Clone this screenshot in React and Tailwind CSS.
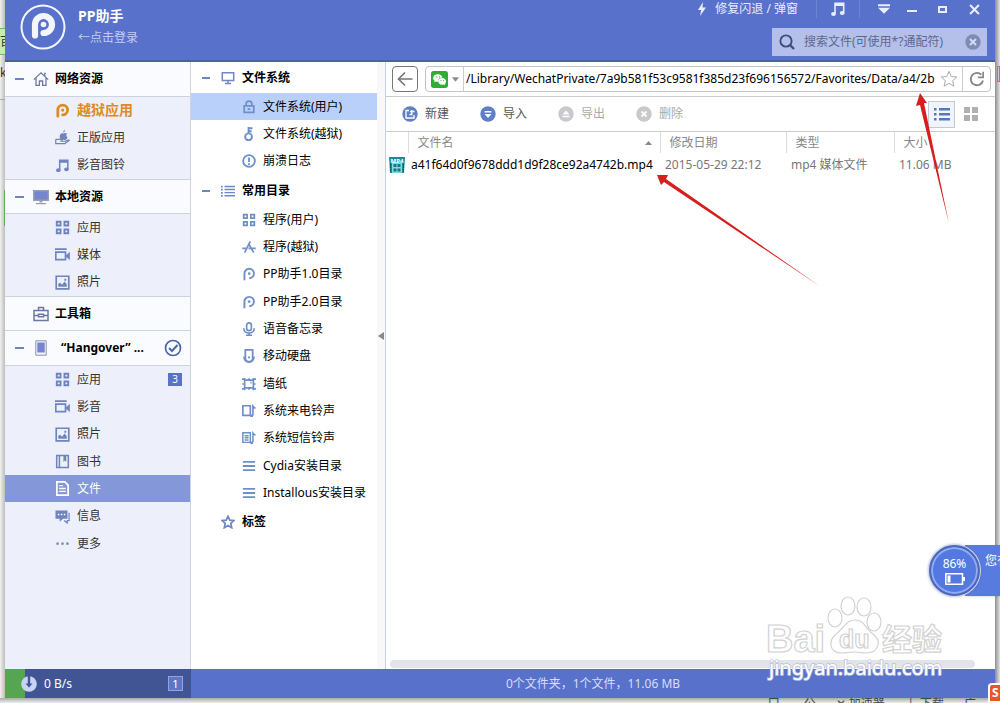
import React, { useState } from 'react';

// 16x16 line icons, drawn in the current text colour
const icons = {
  home: <g fill="none" stroke="currentColor" strokeWidth="1.3"><path d="M.8 8.6 8 1.8l7.2 6.8"/><path d="M3 7v7.3h3.4V10h3.2v4.3H13V7"/><path d="M11.8 5V2.4h1"/></g>,
  monitor: <g><path fill="#9aa0b4" d="M0 1h16v11H0zM6.500 12h3v1.500h-3zM3 14h10v1.200H3z"/><path d="M1.400 2.400h13.200v8.200H1.400z" fill="#7585cf"/></g>,
  toolbox: <g fill="none" stroke="currentColor" strokeWidth="1.500"><path d="M1 4.500h14v10H1zM5.500 4.500v-3h5v3M1 9.500h4.500M10.500 9.500H15M5.500 8.300h5v2.400h-5z"/></g>,
  device: <g><path d="M2.800.8h10.400v14.400H2.800z" fill="#f5f6fb" stroke="#8b93ab"/><path d="M4.300 2.500h7.400v10H4.300z" fill="#7585cf"/></g>,
  pp: <g><path d="M3 14V7.500a5.200 5.200 0 1 1 5.200 5.200" fill="none" stroke="currentColor" strokeWidth="3" strokeLinecap="round"/><circle cx="8.200" cy="7.500" r="1.700" fill="currentColor"/></g>,
  ppThin: <g><path d="M2.800 15V7.500a5.400 5.400 0 1 1 5.400 5.400" fill="none" stroke="currentColor" strokeWidth="2.200"/><circle cx="8.200" cy="7.500" r="1.500" fill="currentColor"/></g>,
  hand: <g><path fill="currentColor" d="M10.500 0c.2 1.300-.6 2.500-1.800 2.700C8.600 1.400 9.400.3 10.500 0zM9 3.600c1-.6 3-.8 4 .4-1.400.9-1.300 3 .4 3.700-.5 1.500-1.500 3-2.800 3-.8 0-1-.4-1.800-.4s-1.200.4-1.900.3C5.200 10.400 4.400 6.700 5.600 4.800 6.400 3.500 8 3.100 9 3.600z"/><path d="M.8 9.800v4.700h9.700L15.300 11c-1-.9-2-.5-4.300 1H6.800c1.200-.8.500-1.900-.8-1.900H.8" fill="none" stroke="currentColor" strokeWidth="1.300"/></g>,
  music: <g fill="currentColor"><path d="M4.200 1.500h10.300v10.200h-1.600V5H5.800v8H4.200z"/><ellipse cx="3.500" cy="13" rx="2.400" ry="2"/><ellipse cx="12.200" cy="12" rx="2.400" ry="2"/></g>,
  apps: <g fill="none" stroke="currentColor" strokeWidth="2"><path d="M1.900 1.900h4v4h-4zM10.100 1.900h4v4h-4zM1.900 10.100h4v4h-4zM10.100 10.100h4v4h-4z"/></g>,
  video: <g><path d="M.8 5.500h10.400v8H.8zM0 2.300h12.500" fill="none" stroke="currentColor" strokeWidth="1.800"/><path d="M11 9.500 15.800 5v9z" fill="currentColor"/></g>,
  photo: <g><path d="M1.300 1.300h13.400v13.400H1.300z" fill="none" stroke="currentColor" strokeWidth="1.800"/><path d="M3.500 12.500V9.300l2-1 2 2L10.200 7l2.300 2.500v3zM10 4h2v2h-2z" fill="currentColor"/></g>,
  book: <g><path d="M1.800 1.500h12.400v13H1.800zM4.700 1.500v13" fill="none" stroke="currentColor" strokeWidth="1.600"/><path d="M9 2h3v6.500L10.500 7 9 8.500z" fill="currentColor"/></g>,
  file: <g><path d="M2 1h8.500L14 4.500V15H2z" fill="none" stroke="currentColor" strokeWidth="1.900"/><path d="M4.500 5h4M4.500 8h7M4.500 11h7" stroke="currentColor" strokeWidth="1.400"/></g>,
  chat: <g><path d="M.5 1.500h12.800v8.800H8.500L5 13.500v-3.200H.5z" fill="currentColor"/><path d="M3 5.800h1.600M6.200 5.800h1.600M9.400 5.800H11" stroke="#fff" strokeWidth="1.500"/><path d="M15 4v8.300h-2V15l-3.300-2.700" fill="none" stroke="currentColor" strokeWidth="1.300"/></g>,
  more: <path d="M1.500 6.800H4v2.400H1.500zM6.800 6.800h2.400v2.400H6.800zM12 6.800h2.500v2.400H12z" fill="currentColor"/>,
  screen: <g fill="none" stroke="currentColor" strokeWidth="1.700"><path d="M1.500 2h13v8.800h-13zM8 11v3M4.500 14.300h7"/></g>,
  list: <path d="M0 2h2v2H0zM0 5.500h2v2H0zM0 9h2v2H0zM0 12.500h2v2H0zM4 2h12v1.700H4zM4 5.500h12v1.700H4zM4 9h12v1.700H4zM4 12.500h12v1.700H4z" fill="currentColor"/>,
  star: <path d="m8 1.500 2 4.400 4.800.5-3.600 3.200 1 4.900L8 12l-4.200 2.500 1-4.900L1.200 6.400 6 5.900z" fill="none" stroke="currentColor" strokeWidth="2"/>,
  lock: <g fill="none" stroke="currentColor" strokeWidth="1.900"><path d="M2.500 6.800h11v7.400h-11zM4.700 6.500V4.600a3.300 3.300 0 0 1 6.600 0v1.900M6.500 10.500h3"/></g>,
  key: <g fill="none" stroke="currentColor" strokeWidth="2.200"><circle cx="7.500" cy="11.200" r="3.900"/><path d="M7.500 8V0M7.500 1.500h4.500M7.500 4.800H11"/></g>,
  alert: <g fill="none" stroke="currentColor" strokeWidth="2.100"><circle cx="8" cy="8" r="6.700"/><path d="M8 4v5M8 10.500v2"/></g>,
  appstore: <g fill="none" stroke="currentColor" strokeWidth="1.900"><path d="M9.500 1.500 3 14.500M7.300 3.500l6 11M.3 9.500h5M7.500 9.500h8.200"/></g>,
  mic: <g fill="none" stroke="currentColor" strokeWidth="1.900"><rect x="5.300" y="1" width="5.400" height="8.800" rx="2.700"/><path d="M2 7c0 7.500 12 7.500 12 0M8 12.500V15M4.500 15.200h7"/></g>,
  disk: <g fill="none" stroke="currentColor" strokeWidth="2"><path d="M3.800 1h8.400v9.200a4.200 4.200 0 1 1-8.400 0z"/><path d="M2.300 8.500c-.5 8.500 11.900 8.500 11.400 0M6.800 9.500h2.400"/></g>,
  wallpaper: <g fill="none" stroke="currentColor" strokeWidth="1.900"><path d="M3 3.500h10v9H3zM0 2.500h3V1M13 1v1.500h3M0 13.500h3V15M13 15v-1.500h3M8 1.500v2M8 12.500v2M.5 8H3M13 8h2.500"/><path d="M9.500 6.500h1.500"/></g>,
  ring: <g fill="none" stroke="currentColor" strokeWidth="1.900"><path d="M1 2h8.500v11H1zM12.500 13V2.500c1 1.500 1.800 2 3 2.300"/><path d="M9.500 13.500h3" strokeWidth="2.800"/></g>,
  sms: <g fill="none" stroke="currentColor" strokeWidth="1.700"><path d="M1 2h8.500v11H1zM12.500 13V2.500c1 1.500 1.800 2 3 2.300M3 5.300h4.500M3 7.700h4.500M3 10.200h4.500"/><path d="M9.500 13.500h3" strokeWidth="2.800"/></g>,
  lines: <path d="M1 3.200h14M1 8h14M1 12.800h14" stroke="currentColor" strokeWidth="2.100"/>,
};

const Icon = ({ name, size = 16, className = '' }) => (
  <svg viewBox="0 0 16 16" width={size} height={size} className={`shrink-0 ${className}`} aria-hidden="true">{icons[name]}</svg>
);

const sidebar = [
  { title: '网络资源', icon: 'home', items: [
    { label: '越狱应用', icon: 'pp', hot: true },
    { label: '正版应用', icon: 'hand' },
    { label: '影音图铃', icon: 'music' },
  ]},
  { title: '本地资源', icon: 'monitor', items: [
    { label: '应用', icon: 'apps' },
    { label: '媒体', icon: 'video' },
    { label: '照片', icon: 'photo' },
  ]},
  { title: '工具箱', icon: 'toolbox', items: [] },
  { title: '“Hangover” ...', icon: 'device', device: true, items: [
    { label: '应用', icon: 'apps', count: 3 },
    { label: '影音', icon: 'video' },
    { label: '照片', icon: 'photo' },
    { label: '图书', icon: 'book' },
    { label: '文件', icon: 'file' },
    { label: '信息', icon: 'chat' },
    { label: '更多', icon: 'more' },
  ]},
];

const tree = [
  { title: '文件系统', icon: 'screen', items: [
    ['文件系统(用户)', 'lock'],
    ['文件系统(越狱)', 'key'],
    ['崩溃日志', 'alert'],
  ]},
  { title: '常用目录', icon: 'list', items: [
    ['程序(用户)', 'apps'],
    ['程序(越狱)', 'appstore'],
    ['PP助手1.0目录', 'ppThin'],
    ['PP助手2.0目录', 'ppThin'],
    ['语音备忘录', 'mic'],
    ['移动硬盘', 'disk'],
    ['墙纸', 'wallpaper'],
    ['系统来电铃声', 'ring'],
    ['系统短信铃声', 'sms'],
    ['Cydia安装目录', 'lines'],
    ['Installous安装目录', 'lines'],
  ]},
  { title: '标签', icon: 'star', items: [] },
];

const Header = () => (
  <header className="flex h-[62px] shrink-0 justify-between border-b-2 border-[#4c60a6] bg-[#5871ca] text-white">
    <div className="flex items-start gap-3 pl-[15px] pt-1">
      <svg viewBox="0 0 46 46" width="46" height="46" aria-hidden="true">
        <circle cx="23" cy="23" r="21.500" fill="none" stroke="#f4f6ff" strokeWidth="2"/>
        <path d="M15 31.500V20.500a8.500 8.500 0 1 1 8.500 8.500" fill="none" stroke="#f4f6ff" strokeWidth="6.200" strokeLinecap="round"/>
        <circle cx="23.500" cy="20.500" r="2.800" fill="#f4f6ff"/>
      </svg>
      <div className="flex flex-col items-start gap-1 pt-0.5">
        <h1 className="text-sm leading-5 font-bold">PP助手</h1>
        <a href="#login" className="leading-4 text-[#c2cdf5]">←点击登录</a>
      </div>
    </div>
    <div className="flex flex-col items-end justify-between pr-2 pb-1">
      <div className="flex h-[18px] items-center text-[#e8edff]">
        <button type="button" className="flex items-center gap-2 pr-[18px]">
          <svg viewBox="0 0 10 14" width="10" height="14" aria-hidden="true"><path d="M6 0 1 8h3.200L3 14l6-8.500H5.500z" fill="currentColor"/></svg>
          修复闪退 / 弹窗
        </button>
        <button type="button" aria-label="音乐" className="flex h-[18px] w-11 items-center justify-center border-x border-[#6c83d6]"><Icon name="music"/></button>
        <button type="button" aria-label="菜单" className="flex w-11 justify-center pl-1">
          <svg viewBox="0 0 10 10" width="12" height="12"><path d="M0 1h10v1.800H0zM0 4h10L5 9z" fill="currentColor"/></svg>
        </button>
        <button type="button" aria-label="最小化" className="flex w-4 justify-center"><span className="mt-1 h-0.5 w-2.5 bg-current"></span></button>
        <button type="button" aria-label="最大化" className="ml-[14px] flex w-4 justify-center"><span className="h-[7px] w-[9px] border-2 border-current"></span></button>
        <button type="button" aria-label="关闭" className="ml-4 flex w-4 justify-center">
          <svg viewBox="0 0 10 10" width="11" height="11"><path d="m1 1 8 8M9 1 1 9" stroke="currentColor" strokeWidth="1.900"/></svg>
        </button>
        <span className="w-[5px]"></span>
      </div>
      <label className="flex h-7 w-[215px] items-center gap-[9px] bg-[#b4c0e9] px-[6px] pl-[7px]">
        <svg viewBox="0 0 16 16" width="16" height="16" className="shrink-0"><circle cx="7" cy="7" r="5.600" fill="none" stroke="#3d4d82" strokeWidth="1.900"/><path d="m11 11 4 4" stroke="#3d4d82" strokeWidth="2.400"/></svg>
        <input type="text" aria-label="搜索文件" placeholder="搜索文件(可使用*?通配符)" className="min-w-0 flex-1 outline-none placeholder:text-[#5d688f]"/>
        <button type="button" aria-label="清除">
          <svg viewBox="0 0 16 16" width="16" height="16"><circle cx="8" cy="8" r="7.700" fill="#7f8bb4"/><path d="m5 5 6 6M11 5l-6 6" stroke="#d3daf3" strokeWidth="2"/></svg>
        </button>
      </label>
    </div>
  </header>
);

const Sidebar = ({ active, onSelect }) => (
  <nav className="w-[186px] shrink-0 border-r border-[#cfd4e2] bg-[#edf0fa] text-[#333]">
    {sidebar.map((s, i) => (
      <section key={s.title}>
        <button type="button" className={`flex h-[35px] w-full items-center border-b border-[#cdd2e0] bg-[#fafbfe] pr-2 pl-[10px] text-left font-bold text-black ${i > 0 && i < 3 ? 'border-t' : ''}`}>
          <span className={`mr-[9px] h-0.5 w-[9px] ${s.items.length ? 'bg-[#6f83bd]' : ''}`}></span>
          <Icon name={s.icon} className="text-[#6b78a3]"/>
          <span className={`flex-1 ${s.device ? 'pl-3' : 'pl-[6px]'}`}>{s.title}</span>
          {s.device && (
            <svg viewBox="0 0 18 18" width="18" height="18"><circle cx="9" cy="9" r="7.500" fill="none" stroke="#4d66a8" strokeWidth="1.700"/><path d="m5 9 3 3 5.500-6" fill="none" stroke="#4d66a8" strokeWidth="2"/></svg>
          )}
        </button>
        <ul>
          {s.items.map(item => {
            const id = `${s.title}/${item.label}`;
            const on = active === id;
            return (
              <li key={id} className="h-[27px] nth-[3n]:h-7">
                <button type="button" onClick={() => onSelect(id)} className={`flex h-full w-full items-center gap-[7px] pr-2 pl-[50px] text-left ${on ? 'bg-[#8497d8] text-white' : ''} ${item.hot ? 'text-[14px] font-bold text-[#dc8b25]' : ''}`}>
                  <Icon name={item.icon} size={15} className={on || item.hot ? '' : 'text-[#6f83bd]'}/>
                  <span className="flex-1">{item.label}</span>
                  {item.count && <span className="h-[13px] w-[14px] bg-[#5871ca] text-center text-[10px] leading-[13px] text-white">{item.count}</span>}
                </button>
              </li>
            );
          })}
        </ul>
      </section>
    ))}
  </nav>
);

const FileTree = ({ active, onSelect }) => (
  <div className="flex w-[195px] shrink-0 border-r border-[#c9cedc] bg-white text-black">
    <nav className="flex-1">
      {tree.map(group => (
        <section key={group.title}>
          <button type="button" className="flex h-[31px] w-full items-center pl-[11px] text-left font-bold">
            <span className={`mr-[11px] h-0.5 w-2 ${group.items.length ? 'bg-[#6f83bd]' : ''}`}></span>
            <Icon name={group.icon} size={14} className="mr-[7px] text-[#6f89c0]"/>
            {group.title}
          </button>
          <ul>
            {group.items.map(([label, icon]) => (
              <li key={label} className="h-[27px] nth-[3n]:h-7">
                <button type="button" onClick={() => onSelect(label)} className={`flex h-full w-full items-center gap-[7px] pl-[51px] text-left whitespace-nowrap ${active === label ? 'bg-[#b9d0fb]' : ''}`}>
                  <Icon name={icon} size={14} className="text-[#6f8fc8]"/>
                  {label}
                </button>
              </li>
            ))}
          </ul>
        </section>
      ))}
    </nav>
    <button type="button" aria-label="收起" className="flex w-2 items-center justify-center bg-[#f8f8fa] pb-[60px]">
      <svg viewBox="0 0 6 8" width="6" height="8"><path d="M6 0v8L0 4z" fill="#888"/></svg>
    </button>
  </div>
);

const AddressBar = () => {
  const [path, setPath] = useState('/Library/WechatPrivate/7a9b581f53c9581f385d23f696156572/Favorites/Data/a4/2b');
  return (
    <div className="flex h-[35px] items-center gap-[7px] border-b border-[#ccc] pr-1 pl-[6px]">
      <button type="button" aria-label="后退" className="flex h-[26px] w-[26px] shrink-0 items-center justify-center rounded-sm border border-[#777]">
        <svg viewBox="0 0 16 16" width="16" height="16"><path d="M15.500 8H1.500M8 1.500 1.500 8 8 14.500" fill="none" stroke="#777" strokeWidth="1.700"/></svg>
      </button>
      <div className="flex h-[26px] min-w-0 flex-1 items-center rounded-sm border border-[#c4c4c4]">
        <button type="button" aria-label="选择应用" className="flex h-full items-center gap-1 border-r border-[#ccc] pr-1 pl-[5px]">
          <svg viewBox="0 0 16 16" width="17" height="17">
            <rect width="16" height="16" rx="2.500" fill="#2fae35"/>
            <path d="M6.500 3C3.900 3 2 4.500 2 6.500c0 1.200.6 2 1.500 2.700L3 10.700l1.800-.9c.6.200 1.200.2 1.900.2C6.300 7.800 8.300 6 10.800 6 10.500 4.200 8.700 3 6.500 3z" fill="#fff"/>
            <path d="M10.500 6.700c-2.200 0-3.800 1.300-3.800 3.100s1.700 3.100 3.800 3.100c.5 0 .9 0 1.300-.2l1.500.8-.4-1.300c.8-.6 1.300-1.400 1.300-2.400 0-1.800-1.600-3.100-3.700-3.100z" fill="#fff"/>
            <path d="M5 5.500h.8M7.600 5.500h.8M9 9h.7M11.300 9h.7" stroke="#2fae35"/>
          </svg>
          <svg viewBox="0 0 8 5" width="7" height="5"><path d="M0 0h8L4 5z" fill="#888"/></svg>
        </button>
        <input type="text" aria-label="路径" value={path} onChange={e => setPath(e.target.value)} className="min-w-0 flex-1 pl-0.5 text-black outline-none"/>
        <button type="button" aria-label="收藏" className="pr-1">
          <svg viewBox="0 0 18 18" width="18" height="18"><path d="m9 1.300 2.200 5.200 5.600.5-4.200 3.700 1.300 5.500L9 13.300l-4.900 2.900 1.300-5.500L1.200 7l5.600-.5z" fill="#fff" stroke="#aaa"/></svg>
        </button>
        <button type="button" aria-label="刷新" className="flex h-full w-7 items-center justify-center border-l border-[#ccc]">
          <svg viewBox="0 0 16 16" width="16" height="16"><path d="M14 9.500A6.200 6.200 0 1 1 12.400 3.700" fill="none" stroke="#888" strokeWidth="1.900"/><path d="M15 .8v6.400H8.800V5.500h4.500V.8z" fill="#888"/></svg>
        </button>
      </div>
    </div>
  );
};

const tools = [
  { label: '新建', sign: <path d="M7 4.500H4v7.500h8V9M7.500 8.500h2.300V4M8 5.500h4.500" fill="none" stroke="#fff" strokeWidth="1.300"/> },
  { label: '导入', sign: <path d="M4.500 5h7v1.500h-7zM4.500 8h7L8 12z" fill="#fff"/> },
  { label: '导出', off: true, sign: <path d="M4.500 9.800h7v1.500h-7zM4.500 8.500h7L8 4.500z" fill="#fff"/> },
  { label: '删除', off: true, sign: <path d="m5.500 5.500 5 5M10.500 5.500l-5 5" stroke="#fff" strokeWidth="1.900"/> },
];

const Toolbar = () => (
  <div className="flex h-[35px] items-center justify-between border-b border-[#ccc] pr-[9px] pl-4">
    <div className="flex gap-[31px]">
      {tools.map(t => (
        <button key={t.label} type="button" disabled={t.off} className={`flex items-center gap-[7px] ${t.off ? 'text-[#aaa]' : 'text-[#555]'}`}>
          <svg viewBox="0 0 16 16" width="16" height="16"><circle cx="8" cy="8" r="7.700" fill={t.off ? '#c9c9cd' : '#5f7fc4'}/>{t.sign}</svg>
          {t.label}
        </button>
      ))}
    </div>
    <div className="flex items-center">
      <button type="button" aria-label="列表视图" className="flex h-[27px] w-[27px] items-center justify-center border border-[#c3c9d8] bg-[#f1f4fb] text-[#5577bb]">
        <svg viewBox="0 0 16 14" width="16" height="14"><path d="M0 1h2.500v2.500H0zM0 6h2.500v2.500H0zM0 11h2.500v2.500H0zM5 1h11v2.500H5zM5 6h11v2.500H5zM5 11h11v2.500H5z" fill="currentColor"/></svg>
      </button>
      <button type="button" aria-label="图标视图" className="flex h-[27px] w-[31px] items-center justify-center">
        <svg viewBox="0 0 14 14" width="14" height="14"><path d="M0 0h6v6H0zM8 0h6v6H8zM0 8h6v6H0zM8 8h6v6H8z" fill="#b0b0b0"/></svg>
      </button>
    </div>
  </div>
);

const FileTable = () => (
  <table className="w-full table-fixed text-left text-[#777]">
    <colgroup>
      <col className="w-[22px]"/><col className="w-[252px]"/><col className="w-[126px]"/><col className="w-[108px]"/><col/>
    </colgroup>
    <thead>
      <tr className="h-[21px] text-[#888]">
        <th></th>
        <th className="border-l border-[#ddd] pl-[9px] font-normal">
          <span className="flex items-center justify-between pr-2">文件名
            <svg viewBox="0 0 7 4" width="7" height="4"><path d="M0 4h7L3.500 0z" fill="#888"/></svg>
          </span>
        </th>
        <th className="border-l border-[#ddd] pl-[9px] font-normal">修改日期</th>
        <th className="border-l border-[#ddd] pl-[9px] font-normal">类型</th>
        <th className="border-l border-[#ddd] pl-[9px] font-normal">大小</th>
      </tr>
    </thead>
    <tbody>
      <tr className="h-[23px] whitespace-nowrap">
        <td className="pl-[3px]">
          <svg viewBox="0 0 16 16" width="16" height="16">
            <path d="M0 0h16l-1 16H1z" fill="#168d9b"/>
            <path d="M3 5h10v11H3z" fill="#7fdedd"/>
            <text x="8" y="5.500" textAnchor="middle" fontSize="6" fontWeight="bold" fill="#fff">MP4</text>
            <path d="M4.500 7h3v3h-3zM8.500 7h3v3h-3zM4.500 11.500h3v3h-3zM8.500 11.500h3v3h-3z" fill="#1b7382"/>
            <path d="M1.500 7v8M14.500 7v8" stroke="#0b4f5c" strokeDasharray="1.500 1"/>
          </svg>
        </td>
        <td className="pl-[3px] text-black">a41f64d0f9678ddd1d9f28ce92a4742b.mp4</td>
        <td className="pl-[5px]">2015-05-29 22:12</td>
        <td className="pl-[5px]">mp4 媒体文件</td>
        <td className="pl-[5px]">11.06 MB</td>
      </tr>
    </tbody>
  </table>
);

const Footer = () => (
  <footer className="flex h-[29px] shrink-0 bg-[#5871ca] text-[#d7def7]">
    <div className="flex w-[186px] items-center bg-[#415594] pr-2">
      <span className="h-full w-5 bg-[#56a552]"></span>
      <svg viewBox="0 0 16 16" width="16" height="16" className="-ml-1"><circle cx="8" cy="8" r="7.800" fill="#c9d3f5"/><path d="M6.800 0h2.400v7.500h2.300L8 11.500 4.500 7.500h2.300z" fill="#415594"/></svg>
      <span className="flex-1 pl-[7px] text-white">0 B/s</span>
      <span className="h-[15px] w-[15px] border border-[#92a3e0] bg-[#5f75c6] text-center text-[11px] leading-[13px] text-white">1</span>
    </div>
    <p className="flex-1 text-center leading-[29px]">0个文件夹，1个文件，11.06 MB</p>
  </footer>
);

const Watermark = () => (
  <svg viewBox="0 0 184 90" width="184" height="90" className="pointer-events-none absolute right-[52px] bottom-[18px]" aria-hidden="true">
    <g fill="#fff" stroke="#d2d2d2" strokeWidth="1.200">
      <text x="2" y="57" fontSize="38" fontWeight="bold" fontFamily="Liberation Sans">Bai</text>
      <ellipse cx="71" cy="23" rx="7" ry="9"/>
      <ellipse cx="84" cy="11" rx="7" ry="9"/>
      <ellipse cx="100" cy="12" rx="7" ry="9"/>
      <ellipse cx="110" cy="27" rx="7" ry="9"/>
      <path d="M91 25c10 0 10 9 18 14 9 7 6 19-7 19-5 0-7-1-12-1s-7 1-12 1c-13 0-14-12-6-19 8-5 9-14 19-14z"/>
      <text x="75" y="53" fontSize="25" fontWeight="bold" fontFamily="Liberation Sans">du</text>
      <text x="118" y="55" fontSize="30" fontWeight="bold" fontFamily="Noto Sans CJK SC">经验</text>
    </g>
    <text x="5" y="80" fontSize="20" fill="#fff" stroke="#b9c1da" strokeWidth="1.600" paintOrder="stroke" fontFamily="Noto Sans">jingyan.baidu.com</text>
  </svg>
);

const BatteryBubble = () => (
  <div className="absolute right-0 bottom-[107px] flex h-[51px] w-[71px] text-white">
    <div className="ml-9 h-[51px] flex-1 overflow-hidden bg-[#587bdf] pt-2 pl-[20px] whitespace-nowrap shadow">您有</div>
    <div className="absolute left-0 flex h-[51px] w-[51px] flex-col items-center justify-center gap-0.5 rounded-full border-2 border-[#4b68bd] bg-[#5378df] shadow-[0_0_3px_#666] ring-1 ring-[#d5dcf2] inset-ring-2 inset-ring-[#91aaf1]">
      <span className="leading-[14px]">86%</span>
      <svg viewBox="0 0 20 12" width="20" height="12"><path d="M.8.800h16.700v10.400H.8z" fill="none" stroke="#fff" strokeWidth="1.500"/><path d="M2.500 2.500h3v7h-3zM18 4h2v4h-2z" fill="#fff"/></svg>
    </div>
  </div>
);

// red pointers drawn over the file list
const Pointers = () => (
  <svg viewBox="0 0 320 220" width="320" height="220" className="pointer-events-none absolute top-[80px] right-[30px]" aria-hidden="true">
    <g fill="#d3201d">
      <path d="m7 95 11 0-2 4 155 108L14 102l-3 3z"/>
      <path d="m270 13 7 10-3 0 25 121-29-119-4 1z"/>
    </g>
  </svg>
);

export default function App() {
  const [section, setSection] = useState('“Hangover” .../文件');
  const [folder, setFolder] = useState('文件系统(用户)');

  return (
    <div className="relative flex min-h-screen flex-col overflow-hidden bg-white font-['Noto_Sans','Noto_Sans_CJK_SC',sans-serif] text-xs">
      <div className="flex flex-1">
        <div className="w-[5px] shrink-0 overflow-hidden bg-linear-to-r from-[#f1f1ef] to-[#bdbdba] pt-7 text-[#333]">
          <div className="h-[27px] border-y border-[#79b860] bg-[#c4ecab] leading-[25px]">百</div>
          <div className="mt-2 h-[37px] border-b border-[#aaa] leading-5">k</div>
          <div className="mt-[90px] h-9 border-r border-[#5fae5a]"></div>
        </div>
        <div className="flex min-w-0 flex-1 flex-col">
          <Header/>
          <div className="flex flex-1">
            <Sidebar active={section} onSelect={setSection}/>
            <FileTree active={folder} onSelect={setFolder}/>
            <main className="flex min-w-0 flex-1 flex-col bg-white">
              <AddressBar/>
              <Toolbar/>
              <FileTable/>
              <div className="mt-auto mr-5 mb-px ml-1 h-2 rounded-full bg-[#e3e4e9]"></div>
            </main>
          </div>
          <Footer/>
        </div>
        <div className="w-[5px] shrink-0 bg-linear-to-r from-[#8f8f92] to-[#e4e4e6] pt-[66px]">
          <div className="ml-0.5 h-4 border border-[#d66]"></div>
        </div>
      </div>
      <div className="flex h-[5px] shrink-0 justify-end gap-5 overflow-hidden bg-linear-to-b from-[#a9a9aa] to-[#efefef] pr-6 leading-3 text-[#444]">
        <span className="pr-1">口</span><span>公</span><span>✕ 加速器</span><span>↓ 下载</span><span>广</span>
      </div>
      <Pointers/>
      <Watermark/>
      <BatteryBubble/>
      <div className="absolute right-0 bottom-0 h-5 w-3 rounded-tl border-2 border-r-0 border-white bg-[#e8562a] pl-0.5 leading-4 font-bold text-white">S</div>
    </div>
  );
}
